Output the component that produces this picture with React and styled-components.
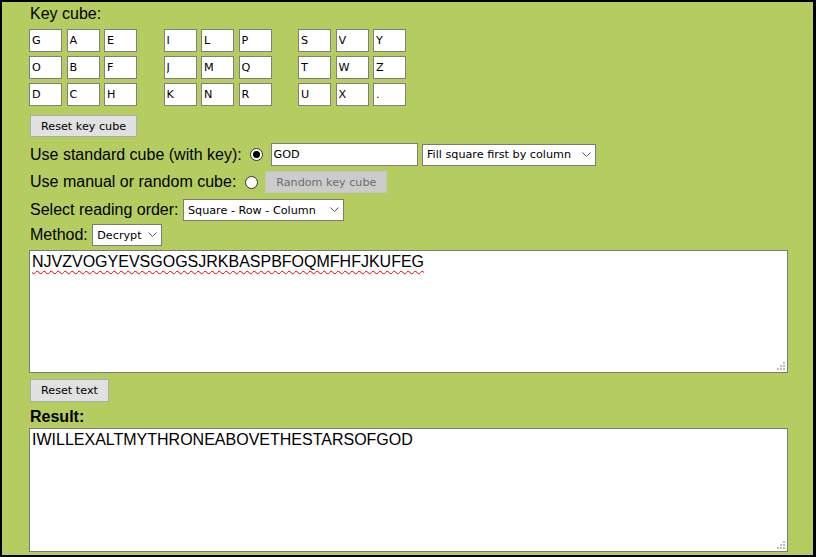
import React from 'react'
import styled, { createGlobalStyle, css } from 'styled-components'

const Global = createGlobalStyle`
  html, body { margin: 0; padding: 0; background: #000; }
  body { font-family: "Liberation Sans", Arial, sans-serif; font-size: 16px; color: #000; }
`

const Frame = styled.div`
  width: 816px;
  height: 557px;
  box-sizing: border-box;
  border-style: solid;
  border-color: #000;
  border-width: 2px 3px 2px 2px;
  background: #b5cd60;
  padding: 3px 0 0 27px;
  overflow: hidden;
`

const Label = styled.div`
  height: 18px;
  line-height: 18px;
  margin-top: ${p => p.$top || 0}px;
  padding-left: 1px;
  font-weight: ${p => (p.$bold ? 700 : 400)};
`

const Cube = styled.div`
  display: flex;
  gap: 26.5px;
  margin-top: 6px;
`

const Square = styled.div`
  display: grid;
  grid-template-columns: repeat(3, 33px);
  grid-auto-rows: 23px;
  column-gap: 4.5px;
  row-gap: 4px;
`

const Cell = styled.input`
  box-sizing: border-box;
  width: 33px;
  height: 23px;
  margin: 0;
  padding: 0 0 0 2px;
  border: 1px solid #7f7f7f;
  border-radius: 0;
  background: #fff;
  font-family: "DejaVu Sans", Verdana, sans-serif;
  font-size: 11.2px;
  color: #000;
  outline: none;
`

const Button = styled.button`
  box-sizing: border-box;
  height: ${p => p.$h || 22}px;
  margin: ${p => p.$top || 0}px 0 0 1px;
  padding: 0 10px;
  border: 1px solid #adadad;
  border-radius: 0;
  background: #e1e1e1;
  font-family: "DejaVu Sans", Verdana, sans-serif;
  font-size: 11.2px;
  color: #000;
  display: block;
  ${p => p.disabled && css`
    display: inline-block;
    margin: 0;
    background: #cccccc;
    border-color: #c4c4c4;
    color: #6d6d6d;
  `}
`

const Row = styled.div`
  display: flex;
  align-items: center;
  gap: 4.45px;
  height: ${p => p.$h}px;
  margin-top: ${p => p.$top}px;
  white-space: nowrap;
  & > span:first-child { padding-left: 1px; }
`

const Radio = styled.span`
  box-sizing: border-box;
  width: 13px;
  height: 13px;
  margin: 0 3px 0 4px;
  border: 1px solid #333;
  border-radius: 50%;
  background: #fff;
  display: inline-flex;
  align-items: center;
  justify-content: center;
  &::after {
    content: '';
    width: 7px;
    height: 7px;
    border-radius: 50%;
    background: ${p => (p.$on ? '#000' : 'transparent')};
  }
`

const KeyInput = styled.input`
  box-sizing: border-box;
  width: 147px;
  height: 23px;
  margin: 0;
  padding: 0 2px;
  border: 1px solid #7f7f7f;
  border-radius: 0;
  font-family: "DejaVu Sans", Verdana, sans-serif;
  font-size: 11.2px;
  color: #000;
  outline: none;
`

const SelectWrap = styled.span`
  position: relative;
  display: inline-block;
  width: ${p => p.$w}px;
  height: 22px;
`

const Select = styled.select`
  appearance: none;
  box-sizing: border-box;
  width: 100%;
  height: 100%;
  margin: 0;
  padding: 0 0 0 4px;
  border: 1px solid #7a7a7a;
  border-radius: 0;
  background: #fff;
  font-family: "DejaVu Sans", Verdana, sans-serif;
  font-size: 11.2px;
  color: #000;
  outline: none;
`

const Chevron = styled.svg`
  position: absolute;
  right: 5px;
  top: 8px;
  pointer-events: none;
`

const TextWrap = styled.div`
  position: relative;
  width: 759px;
  margin-top: ${p => p.$top}px;
`

const Text = styled.textarea`
  display: block;
  box-sizing: border-box;
  width: 100%;
  height: ${p => p.$h}px;
  margin: 0;
  padding: 2px 2px;
  border: 1px solid #7a7a7a;
  border-radius: 0;
  background: #fff;
  font-family: "Liberation Sans", Arial, sans-serif;
  font-size: 16px;
  color: #000;
  outline: none;
  resize: none;
  ${p => p.$typo && css`
    text-decoration: underline wavy #e00000;
    text-decoration-thickness: 1px;
    text-underline-offset: 3px;
  `}
`

const Grip = styled.svg`
  position: absolute;
  right: 3px;
  bottom: 3px;
  pointer-events: none;
`

const cube = [
  ['G', 'A', 'E', 'O', 'B', 'F', 'D', 'C', 'H'],
  ['I', 'L', 'P', 'J', 'M', 'Q', 'K', 'N', 'R'],
  ['S', 'V', 'Y', 'T', 'W', 'Z', 'U', 'X', '.'],
]

const Dropdown = ({ w, children }) => (
  <SelectWrap $w={w}>
    <Select defaultValue={children}>
      <option>{children}</option>
    </Select>
    <Chevron width="9" height="5" viewBox="0 0 9 5">
      <path d="M0.5 0.5 L4.5 4.5 L8.5 0.5" fill="none" stroke="#555" strokeWidth="1" />
    </Chevron>
  </SelectWrap>
)

const TextBox = ({ top, h, typo, value }) => (
  <TextWrap $top={top}>
    <Text $h={h} $typo={typo} spellCheck={false} defaultValue={value} />
    <Grip width="8" height="8" viewBox="0 0 8 8">
      <g fill="#bdbdbd">
        <rect x="6" y="0" width="2" height="2" />
        <rect x="3" y="3" width="2" height="2" />
        <rect x="6" y="3" width="2" height="2" />
        <rect x="0" y="6" width="2" height="2" />
        <rect x="3" y="6" width="2" height="2" />
        <rect x="6" y="6" width="2" height="2" />
      </g>
    </Grip>
  </TextWrap>
)

export default function App() {
  return (
    <Frame>
      <Global />
      <Label>Key cube:</Label>
      <Cube>
        {cube.map((sq, i) => (
          <Square key={i}>
            {sq.map((l, j) => <Cell key={j} defaultValue={l} />)}
          </Square>
        ))}
      </Cube>
      <Button $top={9}>Reset key cube</Button>
      <Row $h={23} $top={6}>
        <span>Use standard cube (with key):</span>
        <Radio $on />
        <KeyInput defaultValue="GOD" />
        <Dropdown w={174}>Fill square first by column</Dropdown>
      </Row>
      <Row $h={22} $top={5}>
        <span>Use manual or random cube:</span>
        <Radio />
        <Button disabled>Random key cube</Button>
      </Row>
      <Row $h={22} $top={6}>
        <span>Select reading order:</span>
        <Dropdown w={161}>Square - Row - Column</Dropdown>
      </Row>
      <Row $h={22} $top={3}>
        <span>Method:</span>
        <Dropdown w={70}>Decrypt</Dropdown>
      </Row>
      <TextBox top={4} h={123} typo value="NJVZVOGYEVSGOGSJRKBASPBFOQMFHFJKUFEG" />
      <Button $top={6} $h={23}>Reset text</Button>
      <Label $top={6} $bold>Result:</Label>
      <TextBox top={2} h={124} value="IWILLEXALTMYTHRONEABOVETHESTARSOFGOD" />
    </Frame>
  )
}
